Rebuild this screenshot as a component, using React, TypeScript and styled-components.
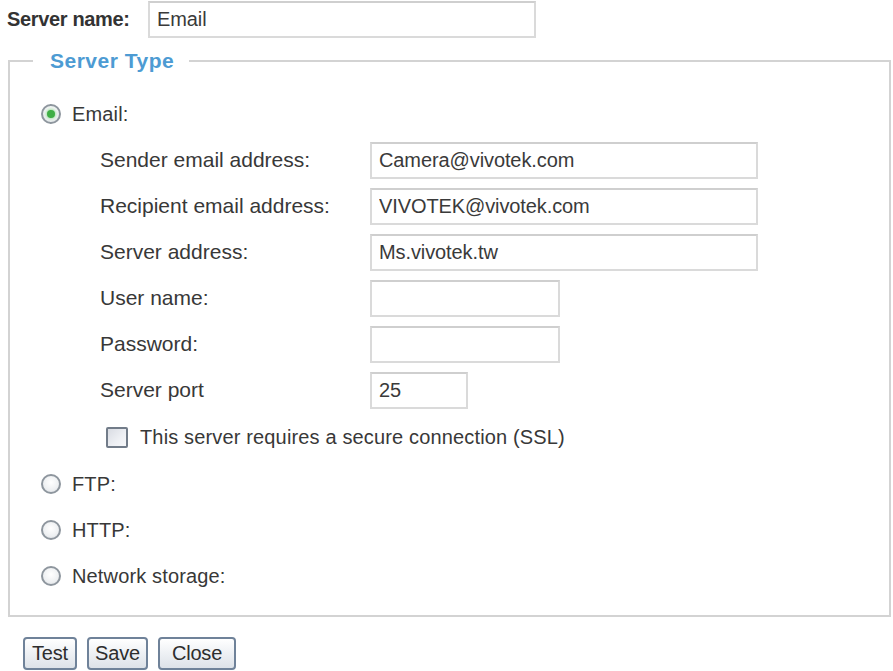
import React from "react";
import styled, { createGlobalStyle } from "styled-components";

const Global = createGlobalStyle`
  html, body { margin: 0; padding: 0; background: #ffffff; }
  body { font-family: "Liberation Sans", Arial, sans-serif; color: #383838; }
  * { box-sizing: border-box; }
`;

const Page = styled.div`
  width: 893px;
  height: 671px;
  overflow: hidden;
  font-size: 20px;
`;

const NameRow = styled.div`
  display: flex;
  align-items: center;
  height: 38px;
  padding-left: 7px;
`;

const NameLabel = styled.label`
  font-weight: bold;
  width: 141px;
  color: #333;
  letter-spacing: -0.35px;
`;

const TextBox = styled.input<{ $w: number }>`
  width: ${(p) => p.$w}px;
  height: 37px;
  border: 2px solid #dadada;
  border-top-color: #cfcfcf;
  background: #fff;
  padding: 0 0 0 7px;
  font-family: "Liberation Sans", Arial, sans-serif;
  font-size: 20px;
  color: #3a3a3a;
  letter-spacing: -0.1px;
  outline: none;
`;

const Group = styled.fieldset`
  margin: 11px 2px 0 8px;
  padding: 0 0 16px 0;
  border: 2px solid #d3d3d3;
  min-width: 0;
`;

const Legend = styled.legend`
  margin-left: 23px;
  padding: 0 15px 0 17px;
  color: #4d9bd3;
  font-weight: bold;
  font-size: 21px;
  line-height: 24px;
  letter-spacing: 0.5px;
`;

const Body = styled.div`
  display: flex;
  flex-direction: column;
  padding-top: 18px;
`;

const OptionRow = styled.div`
  display: flex;
  align-items: center;
  height: 46px;
  padding-left: 31px;
  gap: 11px;
  letter-spacing: 0.15px;
`;

const Radio = styled.span<{ $on?: boolean }>`
  position: relative;
  width: 20px;
  height: 20px;
  border-radius: 50%;
  border: 2px solid #8e969e;
  background: radial-gradient(circle at 50% 40%, #ffffff 0%, #eef0f2 60%, #d9dde2 100%);
  flex: none;
  &::after {
    content: "";
    display: ${(p) => (p.$on ? "block" : "none")};
    position: absolute;
    left: 50%;
    top: 50%;
    width: 8px;
    height: 8px;
    margin: -4px 0 0 -4px;
    border-radius: 50%;
    background: #3fae45;
    box-shadow: 0 0 3px 1px #9fdca2;
  }
`;

const FieldRow = styled.div`
  display: flex;
  align-items: center;
  height: 46px;
  padding-left: 90px;
`;

const FieldLabel = styled.label`
  width: 270px;
  font-size: 21px;
`;

const CheckRow = styled.div`
  display: flex;
  align-items: center;
  height: 48px;
  padding-left: 96px;
  gap: 12px;
  letter-spacing: 0.15px;
`;

const Check = styled.span`
  width: 22px;
  height: 21px;
  border: 2px solid #727c89;
  border-radius: 2px;
  background: linear-gradient(135deg, #d9dce3 0%, #eef0f4 60%, #f7f8fa 100%);
  flex: none;
`;

const Buttons = styled.div`
  display: flex;
  gap: 10px;
  padding: 20px 0 0 23px;
`;

const Btn = styled.button<{ $w: number }>`
  width: ${(p) => p.$w}px;
  height: 33px;
  padding: 0;
  border: 2px solid #6f8299;
  border-radius: 4px;
  background: linear-gradient(#ffffff, #eceff3 55%, #dde2e8);
  font-family: "Liberation Sans", Arial, sans-serif;
  font-size: 20px;
  color: #2d2d2d;
  letter-spacing: -0.2px;
`;

const fields: { label: string; value: string; w: number }[] = [
  { label: "Sender email address:", value: "Camera@vivotek.com", w: 388 },
  { label: "Recipient email address:", value: "VIVOTEK@vivotek.com", w: 388 },
  { label: "Server address:", value: "Ms.vivotek.tw", w: 388 },
  { label: "User name:", value: "", w: 190 },
  { label: "Password:", value: "", w: 190 },
  { label: "Server port", value: "25", w: 98 },
];

export default function App() {
  return (
    <Page>
      <Global />
      <NameRow>
        <NameLabel>Server name:</NameLabel>
        <TextBox $w={388} value="Email" readOnly />
      </NameRow>
      <Group>
        <Legend>Server Type</Legend>
        <Body>
          <OptionRow>
            <Radio $on />
            <span>Email:</span>
          </OptionRow>
          {fields.map((f) => (
            <FieldRow key={f.label}>
              <FieldLabel>{f.label}</FieldLabel>
              <TextBox $w={f.w} value={f.value} readOnly type={f.label === "Password:" ? "password" : "text"} />
            </FieldRow>
          ))}
          <CheckRow>
            <Check />
            <span>This server requires a secure connection (SSL)</span>
          </CheckRow>
          <OptionRow>
            <Radio />
            <span>FTP:</span>
          </OptionRow>
          <OptionRow>
            <Radio />
            <span>HTTP:</span>
          </OptionRow>
          <OptionRow>
            <Radio />
            <span>Network storage:</span>
          </OptionRow>
        </Body>
      </Group>
      <Buttons>
        <Btn $w={54}>Test</Btn>
        <Btn $w={61}>Save</Btn>
        <Btn $w={78}>Close</Btn>
      </Buttons>
    </Page>
  );
}
